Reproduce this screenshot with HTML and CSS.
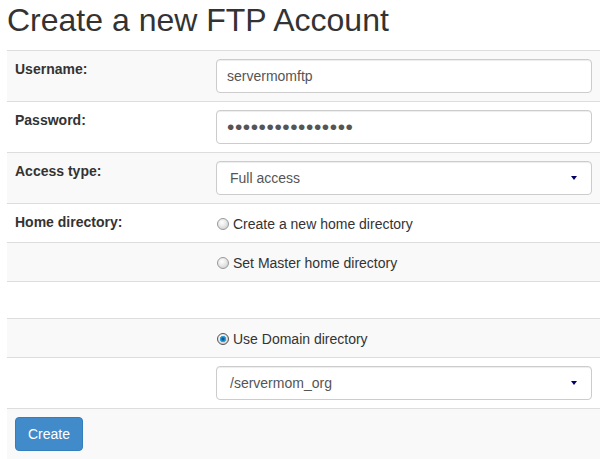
FILE: index.html
```html
<!DOCTYPE html>
<html>
<head>
<meta charset="utf-8">
<title>Create a new FTP Account</title>
<link rel="stylesheet" href="styles.css">
</head>
<body>
<div class="page">
  <h1 class="title">Create a new FTP Account</h1>
  <table class="form-table">
    <tr class="odd">
      <td class="lbl">Username:</td>
      <td class="fld"><input class="control" type="text" value="servermomftp"></td>
    </tr>
    <tr>
      <td class="lbl">Password:</td>
      <td class="fld"><input class="control pw" type="password" value="abcdefghijklmnop"></td>
    </tr>
    <tr class="odd">
      <td class="lbl">Access type:</td>
      <td class="fld"><div class="sel-wrap"><select class="control sel"><option>Full access</option></select></div></td>
    </tr>
    <tr>
      <td class="lbl">Home directory:</td>
      <td class="fld"><label class="radio"><input type="radio" name="home"><span>Create a new home directory</span></label></td>
    </tr>
    <tr class="odd">
      <td class="lbl"></td>
      <td class="fld"><label class="radio"><input type="radio" name="home"><span>Set Master home directory</span></label></td>
    </tr>
    <tr>
      <td class="lbl"></td>
      <td class="fld"><div class="empty"></div></td>
    </tr>
    <tr class="odd">
      <td class="lbl"></td>
      <td class="fld"><label class="radio"><input type="radio" name="home" checked><span>Use Domain directory</span></label></td>
    </tr>
    <tr>
      <td class="lbl"></td>
      <td class="fld"><div class="sel-wrap"><select class="control sel"><option>/servermom_org</option></select></div></td>
    </tr>
    <tr class="odd">
      <td class="lbl"><button class="btn" type="button">Create</button></td>
      <td class="fld"></td>
    </tr>
  </table>
</div>
</body>
</html>
```

FILE: styles.css
```css
html, body {
  margin: 0;
  padding: 0;
  background: #fff;
}
body {
  font-family: "Liberation Sans", Arial, Helvetica, sans-serif;
  font-size: 14px;
  line-height: 20px;
  color: #333;
}
.page {
  padding: 0 2px 0 7px;
}
.title {
  margin: 3px 0 12px 0;
  font-size: 32px;
  line-height: 35px;
  font-weight: normal;
  color: #333;
}
.form-table {
  width: 593px;
  border-collapse: collapse;
  border-spacing: 0;
}
.form-table td {
  border-top: 1px solid #ddd;
  padding: 8px;
  vertical-align: top;
}
.form-table tr.odd td {
  background: #f9f9f9;
}
.lbl {
  width: 185px;
  font-weight: bold;
}
.control {
  display: block;
  width: 100%;
  box-sizing: border-box;
  height: 34px;
  margin: 0;
  padding: 0 10px;
  border: 1px solid #ccc;
  border-radius: 4px;
  background: #fff;
  font-family: "Liberation Sans", Arial, sans-serif;
  font-size: 14px;
  color: #555;
  box-shadow: inset 0 1px 1px rgba(0,0,0,.075);
  outline: none;
}
.pw {
  font-size: 21px;
  letter-spacing: 0.55px;
  padding-left: 10px;
  color: #555;
}
.sel-wrap {
  position: relative;
}
.sel {
  -webkit-appearance: none;
  appearance: none;
  padding-left: 13px;
}
.sel-wrap::after {
  content: "";
  position: absolute;
  right: 15px;
  top: 15px;
  width: 0;
  height: 0;
  border-left: 3px solid transparent;
  border-right: 3px solid transparent;
  border-top: 4px solid #000066;
  pointer-events: none;
}
.radio {
  display: flex;
  align-items: center;
  height: 22px;
  gap: 4px;
  padding-left: 1px;
  padding-top: 2px;
  box-sizing: border-box;
}
.radio input {
  -webkit-appearance: none;
  appearance: none;
  width: 12px;
  height: 12px;
  margin: 0;
  border-radius: 50%;
  border: 1px solid #9a9a9a;
  background: radial-gradient(circle at 40% 35%, #ffffff 0%, #e8e8e8 45%, #c4c4c4 100%);
  box-sizing: border-box;
  flex: none;
}
.radio input:checked {
  background:
    radial-gradient(circle at 50% 50%, #0a3f66 0%, #1c8fd0 30%, #4aa6d8 42%, transparent 46%),
    radial-gradient(circle at 40% 35%, #ffffff 0%, #e4e4e4 50%, #bdbdbd 100%);
  border-color: #555;
}
.radio span {
  color: #333;
  font-weight: normal;
}
.empty {
  height: 20px;
}
.btn {
  display: block;
  height: 34px;
  padding: 0 12px;
  margin: 0;
  border: 1px solid #357ebd;
  border-radius: 4px;
  background: #428bca;
  color: #fff;
  font-family: "Liberation Sans", Arial, sans-serif;
  font-size: 14px;
  font-weight: normal;
}
```
